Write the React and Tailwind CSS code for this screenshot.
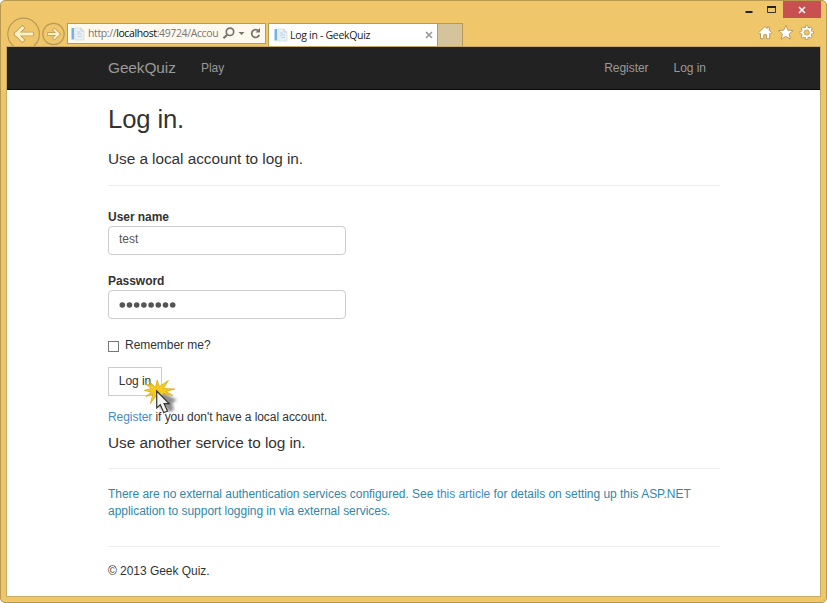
import React from "react";

const uiFont = "font-['Open_Sans','Noto_Sans',sans-serif]";

function PageIcon() {
  return (
    <svg width="14" height="14" viewBox="0 0 14 14" className="shrink-0">
      <rect x="0.5" y="1" width="2.600" height="11.5" fill="#72b3e3" />
      <path d="M4 1h6l3 3v9H4z" fill="#eaf1f6" stroke="#cfdbe4" strokeWidth="0.7" />
      <path d="M10 1v3h3M6 5h3M6 7h5M7 9.500h4" fill="none" stroke="#b9cad8" strokeWidth="0.8" />
    </svg>
  );
}

function NavButtons() {
  return (
    <svg width="60" height="46" viewBox="7 0 60 46" className="shrink-0">
      <g fill="none" stroke="#b8985a" strokeWidth="1.2">
        <circle cx="23.6" cy="33" r="15.8" />
        <circle cx="53.5" cy="33" r="10.7" />
      </g>
      <g fill="none" strokeLinecap="square" strokeLinejoin="miter">
        <path d="M16.500 33h15M22.300 27l-6 6l6 6" stroke="#c09c55" strokeWidth="4.600" />
        <path d="M48.800 33h8.500M54.500 29l4 4l-4 4" stroke="#c09c55" strokeWidth="3.600" />
        <path d="M16.500 33h15M22.300 27l-6 6l6 6" stroke="#fff0c8" strokeWidth="2.900" />
        <path d="M48.800 33h8.500M54.500 29l4 4l-4 4" stroke="#fff0c8" strokeWidth="2.100" />
      </g>
    </svg>
  );
}

function AddressBar() {
  return (
    <div className={`mt-[22px] flex h-[21px] w-[199px] shrink-0 items-center border border-[#b99958] bg-[#fef9ee] pl-[3px] text-[10.5px] text-[#777] ${uiFont}`}>
      <PageIcon />
      <div className="ml-[3px] w-[132px] shrink-0 whitespace-nowrap tracking-[-0.38px]">
        http://<span className="text-[#111]">localhost</span>:49724/Accou
      </div>
      <svg width="42" height="15" viewBox="0 0 42 15" fill="none" stroke="#77736b" className="ml-[2px] shrink-0">
        <circle cx="8" cy="5.800" r="3.700" strokeWidth="1.700" />
        <path d="M5.200 8.800L1.500 12.300" strokeWidth="2.200" />
        <path d="M16.500 6h6l-3 3z" fill="#77736b" stroke="none" />
        <path d="M36.500 4.900a3.900 3.900 0 1 0 .8 4" strokeWidth="1.700" />
        <path d="M38 2v4.500h-4.500z" fill="#77736b" stroke="none" />
      </svg>
    </div>
  );
}

function BrowserChrome() {
  return (
    <header className="flex h-[45px] shrink-0 pl-[6px]">
      <NavButtons />
      <AddressBar />
      <div className={`ml-[2px] mt-[22px] flex h-[23px] w-[170px] shrink-0 items-center border border-b-0 border-[#b99958] bg-white pl-[5px] pr-[4px] text-[10.5px] text-[#222] ${uiFont}`}>
        <PageIcon />
        <span className="ml-[2px] mt-px whitespace-nowrap tracking-[-0.3px]">Log in - GeekQuiz</span>
        <svg width="8" height="8" viewBox="0 0 8 8" className="ml-auto" stroke="#999" strokeWidth="1.6">
          <path d="M1 1l6 6M7 1l-6 6" />
        </svg>
      </div>
      <div className="mt-[22px] h-[23px] w-[25px] shrink-0 border border-b-0 border-l-0 border-[#b99958] bg-[#d5c49b]" />
      <div className="ml-auto mr-[5px] flex flex-col items-end">
        <div className="flex h-[17px]">
          <svg width="38" height="17" viewBox="745 1 38 17" fill="none">
            <path d="M745.500 12h7" stroke="#222" strokeWidth="2" />
            <path d="M767.500 7.500h8v5h-8z" stroke="#333" />
            <path d="M767 7h9" stroke="#222" strokeWidth="2" />
          </svg>
          <div className="flex w-[38px] items-center justify-center bg-[#c85051]">
            <svg width="8" height="8" viewBox="0 0 8 8" stroke="#fff" strokeWidth="1.5">
              <path d="M1 1l6 6M7 1l-6 6" />
            </svg>
          </div>
        </div>
        <svg width="64" height="28" viewBox="757 18 64 28" fill="#fff" stroke="#aa8b4b" strokeWidth="0.8">
          <path d="M765 26.500l2.200 2v-1.500h2v3.300l2.500 2.500l-1.200 1.200l-.8-.6v5.300h-3.200v-4h-2.800v4h-3.200v-5.300l-.8.6l-1.200-1.200z" />
          <path d="M785.800 25.500l2.100 4.700l5.200.4l-4 3.400l1.300 5.100l-4.600-2.700l-4.600 2.700l1.300-5.100l-4-3.400l5.200-.4z" />
          <g transform="translate(806.700 32.500)" fill="none">
            <g stroke="#aa8b4b" strokeWidth="3.200">
              <path d="M0-7V7M-7 0H7M-4.900-4.900L4.900 4.900M4.900-4.900L-4.900 4.900" />
              <circle r="3.700" strokeWidth="3.400" />
            </g>
            <path d="M0-6.400V6.400M-6.400 0H6.400M-4.500-4.500L4.500 4.500M4.500-4.500L-4.500 4.500" stroke="#fff" strokeWidth="1.800" />
            <circle r="3.800" stroke="#fff" strokeWidth="2" />
            <circle r="2.600" fill="#efc76a" stroke="#aa8b4b" strokeWidth=".7" />
          </g>
        </svg>
      </div>
    </header>
  );
}

function ClickCursor() {
  return (
    <svg width="50" height="50" viewBox="140 370 50 50" className="absolute left-[32px] top-[3px] z-10">
      <defs>
        <filter id="soft" x="-50%" y="-50%" width="200%" height="200%">
          <feGaussianBlur stdDeviation="1.6" />
        </filter>
      </defs>
      <path d="M160 391l17 9-5 3 2 7-5 2-4-6-5 4z" fill="#000" opacity=".45" filter="url(#soft)" />
      <path d="M148 380.500l7.500 7l1.700-7.500l2.200 6.500l9-6l-5 8l11.500.5l-9 2.500l7 4l-9.500-2l-2 3l-4-2.500l-7 9.500l2.500-9.500l-7 2.500l5.500-4.500l-7-1.500l7-2l-6-4.500l7 1z" fill="#f5cb1c" stroke="#dba010" strokeWidth=".7" />
      <path d="M156.700 391v17l3.600-3.300l3.500 8l3.700-1.700l-3.400-7.300h5z" fill="#f2f2f2" stroke="#333" strokeWidth="1.200" />
    </svg>
  );
}

function LoginForm() {
  return (
    <form className="flex flex-col items-start">
      <label className="mt-[23px] h-[17px] font-bold leading-[17px]">User name</label>
      <input defaultValue="test" className="h-[29px] w-[238px] rounded-[4px] border border-[#ccc] bg-white px-[10px] pb-[3px] text-[#555] outline-none" />
      <label className="mt-[18px] h-[17px] font-bold leading-[17px]">Password</label>
      <div className="flex h-[29px] w-[238px] items-center rounded-[4px] border border-[#ccc] bg-white px-[10px]">
        <svg width="60" height="8" viewBox="0 0 60 8" fill="#555">
          {Array.from({ length: 8 }, (_, i) => (
            <circle key={i} cx={3.3 + i * 7.2} cy="4" r="2.800" />
          ))}
        </svg>
      </div>
      <label className="mt-[18px] flex h-[17px] items-center leading-[17px]">
        <input type="checkbox" className="mt-[2px] size-[11px] appearance-none border border-[#777] bg-white" />
        <span className="ml-[6px]">Remember me?</span>
      </label>
      <div className="relative mt-[13px]">
        <button type="button" className="block h-[29px] w-[54px] border border-[#ccc] bg-white pb-[2px] text-center">Log in</button>
        <ClickCursor />
      </div>
    </form>
  );
}

export default function App() {
  return (
    <div className="h-[603px] w-[827px] overflow-hidden bg-white">
      <div className="flex h-full flex-col rounded-[5px] border border-[#b9994f] bg-[#efc76a]">
        <BrowserChrome />
        <div className="mx-[5px] mb-[5px] flex flex-1 flex-col border border-[#c7aa62] bg-white font-['Liberation_Sans',Arial,sans-serif] text-[12px] tracking-[-0.04px] text-[#333]">
          <nav className="flex h-[43px] items-center border-b border-[#080808] bg-[#222] pl-[101px] pr-[114px] text-[#999]">
            <span className="w-[93px] text-[15.400px] tracking-[-0.08px]">GeekQuiz</span>
            <span>Play</span>
            <span className="ml-auto">Register</span>
            <span className="ml-[25px]">Log in</span>
          </nav>
          <main className="ml-[101px] w-[612px]">
            <h2 className="mt-[13px] h-[32px] text-[25.700px] leading-[32px] tracking-[-0.15px]">Log in.</h2>
            <h4 className="mt-[14px] h-[20px] text-[15.400px] leading-[20px] tracking-[-0.06px]">Use a local account to log in.</h4>
            <hr className="mt-[16px] border-[#eee]" />
            <LoginForm />
            <p className="mt-[13px] h-[17px] leading-[17px] tracking-[-0.06px]">
              <a className="text-[#428bca]">Register</a> if you don't have a local account.
            </p>
            <h4 className="mt-[7px] h-[20px] text-[15.400px] leading-[20px] tracking-[-0.06px]">Use another service to log in.</h4>
            <hr className="mt-[15px] border-[#eee]" />
            <p className="mt-[17px] leading-[17px] tracking-[-0.036px] text-[#3187aa]">
              There are no external authentication services configured. See <a className="text-[#428bca]">this article</a> for details on setting up this ASP.NET
              <br />
              application to support logging in via external services.
            </p>
            <hr className="mt-[26px] border-[#eee]" />
            <footer className="mt-[16px] leading-[17px]">© 2013 Geek Quiz.</footer>
          </main>
        </div>
      </div>
    </div>
  );
}
